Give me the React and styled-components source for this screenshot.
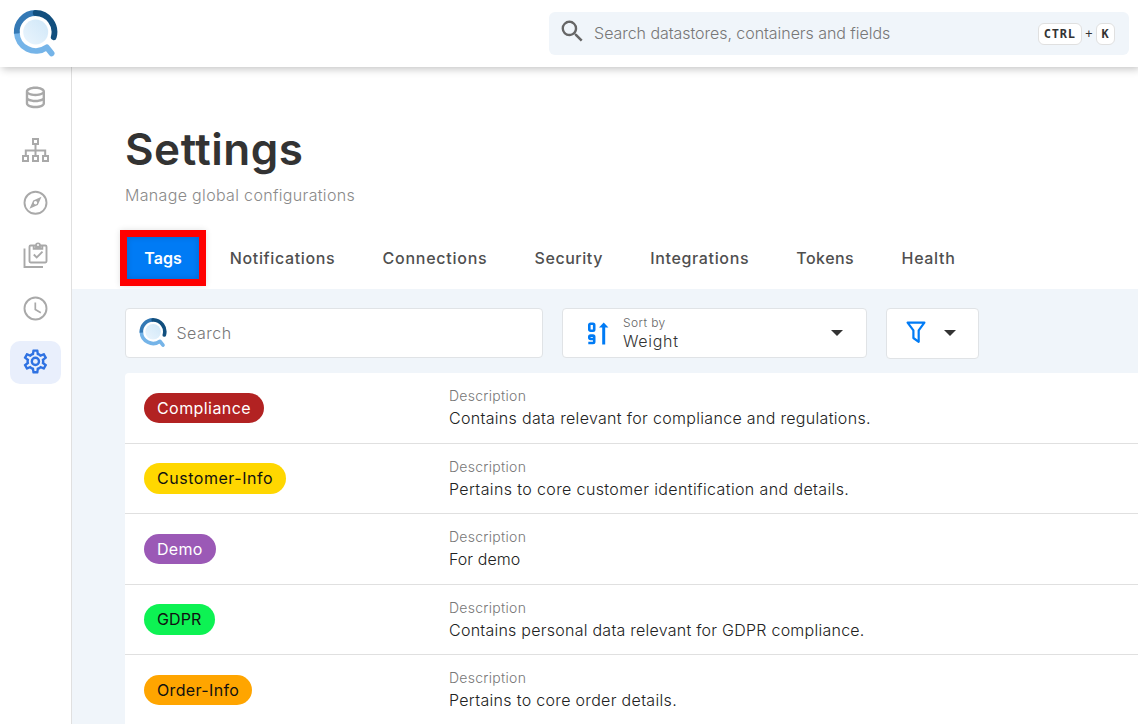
import React from "react";
import styled, { createGlobalStyle } from "styled-components";

const GlobalStyle = createGlobalStyle`
  *, *::before, *::after { box-sizing: border-box; }
  html, body { margin: 0; height: 100%; overflow: hidden; background: #fff; }
  body { font-family: Inter, "Liberation Sans", sans-serif; color: #333; }
  svg { display: block; flex: none; }
`;

const Page = styled.div`
  height: 724px;
  display: flex;
  flex-direction: column;
  overflow: hidden;
`;

const Header = styled.header`
  height: 67px;
  flex: none;
  display: flex;
  align-items: flex-start;
  justify-content: space-between;
  padding: 10px 9px 0 13px;
  background: #fff;
  box-shadow: 2px 2px 8px rgba(0, 0, 0, 0.24);
  z-index: 1;
`;

const GlobalSearch = styled.div`
  width: 580px;
  height: 43px;
  margin-top: 2px;
  padding: 0 14px 1px 9px;
  display: flex;
  align-items: center;
  border-radius: 6px;
  background: #f0f5fa;
`;

const SearchIcon = styled.span`
  color: #666;
  padding-bottom: 3px;
`;

const Placeholder = styled.span`
  flex: 1;
  margin-left: ${(p) => p.$gap}px;
  color: #777;
  font-size: 16px;
  font-weight: 300;
  white-space: nowrap;
  letter-spacing: ${(p) => p.$spacing || 0}px;
`;

const Shortcut = styled.div`
  display: flex;
  align-items: center;
  gap: 3.5px;
  padding-top: 1px;
  font: 12px "DejaVu Sans Mono", monospace;
  color: #333;
`;

const Key = styled.kbd`
  height: 22px;
  width: ${(p) => p.$width}px;
  display: flex;
  align-items: center;
  justify-content: center;
  border: 1px solid #e0e0e0;
  border-radius: 6px;
  background: #fff;
  color: #333;
  font: bold 12px "DejaVu Sans Mono", monospace;
  letter-spacing: 0.8px;
`;

const Body = styled.div`
  flex: 1;
  min-height: 0;
  display: flex;
`;

const Sidebar = styled.nav`
  width: 72px;
  flex: none;
  border-right: 1px solid #e0e0e0;
  padding: 9px 10px 0;
  display: flex;
  flex-direction: column;
  gap: 9.7px;
`;

const NavItem = styled.a`
  width: 51px;
  height: 43px;
  flex: none;
  display: flex;
  align-items: center;
  justify-content: center;
  border-radius: 10px;
  margin-top: ${(p) => (p.$active ? 1.5 : 0)}px;
  padding-bottom: ${(p) => (p.$active ? 3 : 0)}px;
  color: ${(p) => (p.$active ? "#2f72e2" : "#a9a9a9")};
  background: ${(p) => (p.$active ? "#e9effc" : "transparent")};
`;

const Main = styled.main`
  flex: 1;
  min-width: 0;
  display: flex;
  flex-direction: column;
`;

const Intro = styled.section`
  height: 163px;
  flex: none;
  padding: 54px 0 0 53px;
`;

const Title = styled.h1`
  margin: 0;
  font-size: 44px;
  line-height: 56px;
  font-weight: 600;
  letter-spacing: 0.5px;
  color: #333;
`;

const Subtitle = styled.p`
  margin: 7px 0 0;
  font-size: 16px;
  line-height: 22px;
  font-weight: 300;
  letter-spacing: 0.33px;
  color: #8a8a8a;
`;

const Tabs = styled.div`
  height: 59px;
  flex: none;
  padding-left: 48px;
  display: flex;
`;

const Tab = styled.button`
  width: ${(p) => p.$width}px;
  height: 56px;
  flex: none;
  padding: 0;
  border: ${(p) => (p.$active ? "7px solid #f00" : "0")};
  background: ${(p) => (p.$active ? "#007bf5" : "transparent")};
  color: ${(p) => (p.$active ? "#fff" : "#4f4f4f")};
  box-shadow: ${(p) =>
    p.$active ? "0 0 6px rgba(0,0,0,.12), inset 0 0 6px rgba(0,0,0,.16)" : "none"};
  font-family: inherit;
  font-size: 16px;
  font-weight: ${(p) => (p.$active ? 600 : 450)};
  letter-spacing: ${(p) => p.$spacing}px;
  white-space: nowrap;
`;

const Panel = styled.section`
  flex: 1;
  background: #f0f5fa;
  padding: 19px 0 0 53px;
`;

const Filters = styled.div`
  display: flex;
  align-items: flex-start;
  gap: 19px;
  height: 65.3px;
`;

const Field = styled.div`
  width: ${(p) => p.$width}px;
  height: ${(p) => p.$height || 50}px;
  padding: ${(p) => p.$padding};
  display: flex;
  align-items: center;
  justify-content: space-between;
  border: 1px solid #e0e3e6;
  border-radius: 4px;
  background: #fff;
`;

const SortText = styled.div`
  flex: 1;
  margin-left: 14px;
  font-weight: 300;
`;

const SortLabel = styled.div`
  font-size: 12px;
  line-height: 16px;
  color: #666;
  letter-spacing: 0.4px;
`;

const SortValue = styled.div`
  font-size: 16px;
  line-height: 20px;
  letter-spacing: 0.7px;
  color: #333;
`;

const List = styled.div`
  background: #fff;
  border-top-left-radius: 4px;
`;

const Row = styled.div`
  height: 70.5px;
  display: flex;
  border-bottom: 1px solid #e0e0e0;
`;

const TagCell = styled.div`
  width: 324px;
  padding: 19.3px 0 0 19px;
`;

const Tag = styled.span`
  width: ${(p) => p.$width}px;
  height: 30.5px;
  display: flex;
  align-items: center;
  padding-left: 13px;
  border-radius: 16px;
  background: ${(p) => p.$bg};
  color: ${(p) => p.$color};
  font-size: 16px;
  font-weight: 400;
  letter-spacing: ${(p) => p.$spacing}px;
  white-space: nowrap;
`;

const DescriptionCell = styled.div`
  padding-top: 13px;
  white-space: nowrap;
`;

const DescriptionLabel = styled.div`
  font-size: 14px;
  line-height: 20px;
  font-weight: 300;
  color: #777;
  letter-spacing: 0.28px;
`;

const DescriptionText = styled.div`
  margin-top: 1px;
  font-size: 16px;
  line-height: 22px;
  font-weight: 300;
  color: #222;
  letter-spacing: ${(p) => p.$spacing}px;
`;

const Logo = ({ size, id }) => (
  <svg width={size} height={size * 1.045} viewBox="0 0 45 47" fill="none">
    <defs>
      <linearGradient id={id} x1="1" y1="0" x2="0" y2="1">
        <stop stopColor="#d0e7f8" />
        <stop offset="1" stopColor="#eaf5fd" />
      </linearGradient>
    </defs>
    <circle cx="22.7" cy="22" r="12.5" fill={`url(#${id})`} />
    <g strokeWidth="5.8" strokeLinecap="round" strokeLinejoin="round">
      <path d="M3.8 22.5A19 19 0 0 0 33.8 37.4L38.6 43.4" stroke="#75b4e8" />
      <path d="M22.5 3A19 19 0 0 0 3.8 23.5" stroke="#3479b5" strokeLinecap="butt" />
      <path d="M22.7 3A19 19 0 0 1 40.7 27.2" stroke="#124f7e" />
    </g>
  </svg>
);

const Mdi = ({ d, size = 28.8 }) => (
  <svg width={size} height={size} viewBox="0 0 24 24" fill="currentColor">
    <path d={d} />
  </svg>
);

const Caret = () => (
  <svg width="12" height="6" viewBox="0 0 12 6" fill="#333">
    <path d="M0 0H12L6 6Z" />
  </svg>
);

const DATABASE =
  "M12 3C7.58 3 4 4.79 4 7V17C4 19.21 7.59 21 12 21S20 19.21 20 17V7C20 4.79 16.42 3 12 3M18 17C18 17.5 15.87 19 12 19S6 17.5 6 17V14.77C7.61 15.55 9.72 16 12 16S16.39 15.55 18 14.77V17M18 12.45C16.7 13.4 14.42 14 12 14C9.58 14 7.3 13.4 6 12.45V9.64C7.47 10.47 9.61 11 12 11C14.39 11 16.53 10.47 18 9.64V12.45M12 9C8.13 9 6 7.5 6 7S8.13 5 12 5C15.87 5 18 6.5 18 7S15.87 9 12 9Z";
const COG =
  "M12,8A4,4 0 0,1 16,12A4,4 0 0,1 12,16A4,4 0 0,1 8,12A4,4 0 0,1 12,8M12,10A2,2 0 0,0 10,12A2,2 0 0,0 12,14A2,2 0 0,0 14,12A2,2 0 0,0 12,10M10,22C9.75,22 9.54,21.82 9.5,21.58L9.13,18.93C8.5,18.68 7.96,18.34 7.44,17.94L4.95,18.95C4.73,19.03 4.46,18.95 4.34,18.73L2.34,15.27C2.21,15.05 2.27,14.78 2.46,14.63L4.57,12.97L4.5,12L4.57,11L2.46,9.37C2.27,9.22 2.21,8.95 2.34,8.73L4.34,5.27C4.46,5.05 4.73,4.96 4.95,5.05L7.44,6.05C7.96,5.66 8.5,5.32 9.13,5.07L9.5,2.42C9.54,2.18 9.75,2 10,2H14C14.25,2 14.46,2.18 14.5,2.42L14.87,5.07C15.5,5.32 16.04,5.66 16.56,6.05L19.05,5.05C19.27,4.96 19.54,5.05 19.66,5.27L21.66,8.73C21.79,8.95 21.73,9.22 21.54,9.37L19.43,11L19.5,12L19.43,13L21.54,14.63C21.73,14.78 21.79,15.05 21.66,15.27L19.66,18.73C19.54,18.95 19.27,19.04 19.05,18.95L16.56,17.95C16.04,18.34 15.5,18.68 14.87,18.93L14.5,21.58C14.46,21.82 14.25,22 14,22H10M11.25,4L10.88,6.61C9.68,6.86 8.62,7.5 7.85,8.39L5.44,7.35L4.69,8.65L6.8,10.2C6.4,11.37 6.4,12.64 6.8,13.8L4.68,15.36L5.43,16.66L7.86,15.62C8.63,16.5 9.68,17.14 10.87,17.38L11.24,20H12.76L13.13,17.39C14.32,17.14 15.37,16.5 16.14,15.62L18.57,16.66L19.32,15.36L17.2,13.81C17.6,12.64 17.6,11.37 17.2,10.2L19.31,8.65L18.56,7.35L16.15,8.39C15.38,7.5 14.32,6.86 13.12,6.62L12.75,4H11.25Z";
const MAGNIFY =
  "M9.5,3A6.5,6.5 0 0,1 16,9.5C16,11.11 15.41,12.59 14.44,13.73L14.71,14H15.5L20.5,19L19,20.5L14,15.5V14.71L13.73,14.44C12.59,15.41 11.11,16 9.5,16A6.5,6.5 0 0,1 3,9.5A6.5,6.5 0 0,1 9.5,3M9.5,5C7,5 5,7 5,9.5C5,12 7,14 9.5,14C12,14 14,12 14,9.5C14,7 12,5 9.5,5Z";

const Sitemap = () => (
  <svg width="27" height="24" viewBox="0 0 27 24" fill="none" stroke="currentColor" strokeWidth="2">
    <path d="M11 1H16V6H11ZM1 18H6V23H1ZM11 18H16V23H11ZM21 18H26V23H21ZM13.5 7V17M3.8 17V12.5H23.2V17" />
  </svg>
);

const Compass = () => (
  <svg width="25" height="25" viewBox="-.5 -.8 25 25" fill="none" stroke="currentColor">
    <circle cx="12" cy="12" r="11" strokeWidth="1.9" />
    <path
      d="M6 18L9.7 9.7L18 6L14.3 14.3ZM12 10.3A1.7 1.7 0 1 0 12 13.7A1.7 1.7 0 1 0 12 10.3Z"
      fill="currentColor"
      fillRule="evenodd"
      stroke="none"
    />
  </svg>
);

const Checklist = () => (
  <svg width="25" height="27" viewBox="-.5 .5 25 27" fill="none" stroke="currentColor" strokeWidth="1.9">
    <path d="M1 7V25.5H19.5" />
    <rect x="6" y="4" width="17" height="17" rx="1.2" />
    <path d="M10.2 4V7.2H18.8V4" />
    <path d="M11.6 4A2.9 2.9 0 0 1 17.4 4V7H11.6Z" fill="currentColor" stroke="none" />
    <circle cx="14.5" cy="3.6" r="1" fill="#fff" stroke="none" />
    <path d="M10.3 13L13.2 16L19 10.2" />
  </svg>
);

const Clock = () => (
  <svg width="25" height="25" viewBox="-.5 -.5 25 25" fill="none" stroke="currentColor">
    <circle cx="12" cy="12" r="11" strokeWidth="1.9" />
    <path d="M11.8 6V13L17.3 16.2" strokeWidth="1.7" />
  </svg>
);

const SortNumeric = () => (
  <svg width="22" height="23" viewBox="0 0 22 23" fill="none" stroke="#007bf5" strokeWidth="2.6">
    <rect x="2.3" y="1.8" width="4.9" height="7" rx="1.2" />
    <path d="M7.2 17H3.5Q2.3 17 2.3 15.8V14.8Q2.3 13.6 3.5 13.6H6Q7.2 13.6 7.2 14.8V19.8Q7.2 21 6 21H1.3" />
    <path d="M16.7 22.5V4" strokeWidth="3" />
    <path d="M12 5.6L16.7.6L21.4 5.6Z" fill="#007bf5" stroke="none" />
  </svg>
);

const Funnel = () => (
  <svg width="20" height="23" viewBox="0 0 20 23" fill="none" stroke="#007bf5" strokeWidth="2.2" strokeLinejoin="round">
    <path d="M1.6 1.6H18.4L12.7 9.3V20.8L7.4 17V9.3Z" />
  </svg>
);

const NAV = [
  { name: "datastores", icon: <Mdi d={DATABASE} /> },
  { name: "containers", icon: <Sitemap /> },
  { name: "explore", icon: <Compass /> },
  { name: "checks", icon: <Checklist /> },
  { name: "activity", icon: <Clock /> },
  { name: "settings", icon: <Mdi d={COG} />, active: true },
];

const TABS = [
  { label: "Tags", width: 86, active: true, spacing: 0 },
  { label: "Notifications", width: 153, spacing: 0.62 },
  { label: "Connections", width: 152, spacing: 0.75 },
  { label: "Security", width: 115.5, spacing: 0.55 },
  { label: "Integrations", width: 146.5, spacing: 0.64 },
  { label: "Tokens", width: 104.5, spacing: 0.45 },
  { label: "Health", width: 102, spacing: 0.66 },
];

const TAGS = [
  { name: "Compliance", width: 120, bg: "#b22222", color: "#fff", spacing: 0.43, text: "Contains data relevant for compliance and regulations.", textSpacing: 0.32 },
  { name: "Customer-Info", width: 142, bg: "#ffd700", color: "#111", spacing: 0.53, text: "Pertains to core customer identification and details.", textSpacing: 0.38 },
  { name: "Demo", width: 72, bg: "#9b59b6", color: "#fff", spacing: 0.3, text: "For demo", textSpacing: 0.05 },
  { name: "GDPR", width: 71, bg: "#0df253", color: "#111", spacing: 0.1, text: "Contains personal data relevant for GDPR compliance.", textSpacing: 0.25 },
  { name: "Order-Info", width: 108, bg: "#ffa500", color: "#111", spacing: 0.36, text: "Pertains to core order details.", textSpacing: 0.32 },
];

export default function App() {
  return (
    <>
      <GlobalStyle />
      <Page>
        <Header>
          <Logo size={45} id="logo-header" />
          <GlobalSearch>
            <SearchIcon>
              <Mdi d={MAGNIFY} size={28.8} />
            </SearchIcon>
            <Placeholder $gap={7.3} $spacing={-0.05}>
              Search datastores, containers and fields
            </Placeholder>
            <Shortcut>
              <Key $width={44}>CTRL</Key>+<Key $width={19}>K</Key>
            </Shortcut>
          </GlobalSearch>
        </Header>
        <Body>
          <Sidebar>
            {NAV.map((item) => (
              <NavItem key={item.name} $active={item.active}>
                {item.icon}
              </NavItem>
            ))}
          </Sidebar>
          <Main>
            <Intro>
              <Title>Settings</Title>
              <Subtitle>Manage global configurations</Subtitle>
            </Intro>
            <Tabs>
              {TABS.map((tab) => (
                <Tab key={tab.label} $width={tab.width} $active={tab.active} $spacing={tab.spacing}>
                  {tab.label}
                </Tab>
              ))}
            </Tabs>
            <Panel>
              <Filters>
                <Field $width={418} $padding="0 13px">
                  <Logo size={28} id="logo-search" />
                  <Placeholder $gap={9.5} $spacing={0.5}>
                    Search
                  </Placeholder>
                </Field>
                <Field $width={305} $padding="0 23px 0 24px">
                  <SortNumeric />
                  <SortText>
                    <SortLabel>Sort by</SortLabel>
                    <SortValue>Weight</SortValue>
                  </SortText>
                  <Caret />
                </Field>
                <Field $width={93} $height={51} $padding="0 22px 2px 19px">
                  <Funnel />
                  <Caret />
                </Field>
              </Filters>
              <List>
                {TAGS.map((tag) => (
                  <Row key={tag.name}>
                    <TagCell>
                      <Tag $width={tag.width} $bg={tag.bg} $color={tag.color} $spacing={tag.spacing}>
                        {tag.name}
                      </Tag>
                    </TagCell>
                    <DescriptionCell>
                      <DescriptionLabel>Description</DescriptionLabel>
                      <DescriptionText $spacing={tag.textSpacing}>{tag.text}</DescriptionText>
                    </DescriptionCell>
                  </Row>
                ))}
              </List>
            </Panel>
          </Main>
        </Body>
      </Page>
    </>
  );
}
